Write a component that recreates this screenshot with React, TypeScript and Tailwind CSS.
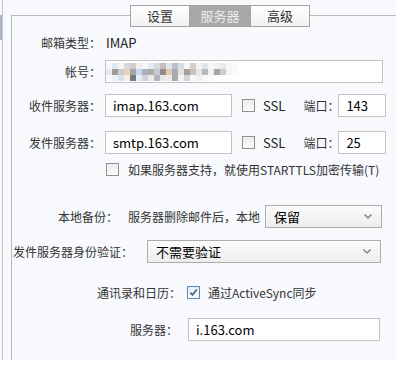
import React from "react";

const font = "font-['Microsoft_YaHei','Noto_Sans_CJK_SC',sans-serif]";

const mosaic = [
  ["#f6f7fa", "#e2e7ee", "#f4f5f7", "#d9d9dd", "#cfcbcb", "#eeeeef", "#f7f7f7", "#e6e9ef", "#d5d7dd", "#c4bfbf", "#e1e5eb", "#bcc0c7", "#d9dde5", "#f5f5f6", "#d2cdcc", "#f3f3f3", "#e3e5ea", "#f6f6f6", "#f2f2f3", "#eaeaea", "#f8f8f8", "#fbfbfb"],
  ["#e7ebf1", "#a39a94", "#c9ccd0", "#e9d3b8", "#9fa6aa", "#c6d9ec", "#aab2bd", "#b3aba6", "#c2cad9", "#938a83", "#dfcab1", "#a6aebd", "#e9e1d9", "#a39e9e", "#cac2be", "#ece5de", "#b9b9bd", "#f1f1f2", "#a8a2a2", "#d3c9c4", "#f4f4f4", "#fbfbfb"],
  ["#f8f9fb", "#eef0f3", "#dde2e8", "#f4efe9", "#7c7a78", "#e4ecf4", "#d0d4da", "#ecebea", "#b5b3b3", "#e6e6e8", "#f2ebe3", "#a9aab0", "#f1f2f4", "#d7d7d9", "#f7f7f7", "#efefef", "#f9f9f9", "#fbfbfb", "#fcfcfc", "#fdfdfd", "#fefefe", "#ffffff"],
];

function Input({ value, w, children }: { value?: string; w: string; children?: React.ReactNode }) {
  return (
    <div className={`${w} h-[23px] shrink-0 border border-[#c3c3c3] bg-white flex items-center px-[7px] text-[13px] text-black`}>
      {children ?? value}
    </div>
  );
}

function Check({ checked }: { checked?: boolean }) {
  return (
    <div
      className={`w-[13px] h-[13px] shrink-0 border ${checked ? "border-[#5b89b8]" : "border-[#8e8f8f]"} bg-gradient-to-b from-[#ededed] to-[#fbfbfb] flex items-center justify-center`}
    >
      {checked && (
        <svg width="9" height="9" viewBox="0 0 9 9">
          <path d="M1.2 4.6 L3.5 6.8 L7.8 1.6" fill="none" stroke="#2e5f96" strokeWidth="1.5" />
        </svg>
      )}
    </div>
  );
}

function Select({ value, w }: { value: string; w: string }) {
  return (
    <div className={`${w} h-[23px] shrink-0 border border-[#adadad] bg-gradient-to-b from-[#fbfbfb] to-[#ededed] flex items-center justify-between pl-[8px] pr-[9px] text-[13px] text-black`}>
      <span>{value}</span>
      <svg width="8" height="5" viewBox="0 0 8 5">
        <path d="M0.5 0.5 L4 4 L7.5 0.5" fill="none" stroke="#6e6e6e" strokeWidth="1.1" />
      </svg>
    </div>
  );
}

const label = "text-[12px] text-[#333] whitespace-nowrap";

export default function App() {
  return (
    <div className={`w-[396px] h-[370px] bg-white flex flex-col overflow-hidden ${font}`}>
      <div className="h-[360px] flex bg-[#f7f9fd]">
        {/* left scroll strip */}
        <div className="w-[3px] border-r border-[#c6c6c6] pt-[15px]">
          <div className="h-[25px] bg-[#a9b6c8]" />
        </div>
        <div className="w-[8px]" />
        <div className="flex-1 flex flex-col">
          <div className="h-[15px]" />
          <div className="flex-1 border-l border-t border-[#b9b9b9] flex flex-col">
            {/* tabs */}
            <div className="-mt-[11px] ml-[118px] flex h-[22px] text-[13px]">
              <div className="w-[60px] border border-[#a3a3a3] bg-gradient-to-b from-[#ffffff] to-[#f1f1f1] flex items-center justify-center text-[#333]">设置</div>
              <div className="w-[60px] border-y border-[#a3a3a3] bg-[#a8a8a8] flex items-center justify-center text-[#ececec]">服务器</div>
              <div className="w-[60px] border border-[#a3a3a3] bg-gradient-to-b from-[#ffffff] to-[#f1f1f1] flex items-center justify-center text-[#333]">高级</div>
            </div>

            <div className="mt-[4px] h-[23px] flex items-center">
              <div className={`w-[89px] text-right ${label}`}>邮箱类型：</div>
              <div className="ml-[5px] text-[13px] text-[#222]">IMAP</div>
            </div>

            <div className="mt-[6px] h-[23px] flex items-center">
              <div className={`w-[89px] text-right ${label}`}>帐号：</div>
              <div className="ml-[4px]">
                <Input w="w-[278px]">
                  <div className="flex flex-col -ml-[7px]">
                    {mosaic.map((row, i) => (
                      <div key={i} className="flex">
                        {row.map((c, j) => (
                          <div key={j} className="w-[6px] h-[6px]" style={{ background: c }} />
                        ))}
                      </div>
                    ))}
                  </div>
                </Input>
              </div>
            </div>

            <div className="mt-[11px] h-[23px] flex items-center">
              <div className={`w-[89px] text-right ${label}`}>收件服务器：</div>
              <div className="ml-[4px]"><Input w="w-[127px]" value="imap.163.com" /></div>
              <div className="ml-[10px]"><Check /></div>
              <div className="ml-[8px] text-[13px] text-[#222]">SSL</div>
              <div className={`ml-[18px] ${label}`}>端口：</div>
              <div className="ml-[-1px]"><Input w="w-[48px]" value="143" /></div>
            </div>

            <div className="mt-[14px] h-[23px] flex items-center">
              <div className={`w-[89px] text-right ${label}`}>发件服务器：</div>
              <div className="ml-[4px]"><Input w="w-[127px]" value="smtp.163.com" /></div>
              <div className="ml-[10px]"><Check /></div>
              <div className="ml-[8px] text-[13px] text-[#222]">SSL</div>
              <div className={`ml-[18px] ${label}`}>端口：</div>
              <div className="ml-[-1px]"><Input w="w-[48px]" value="25" /></div>
            </div>

            <div className="mt-[4px] h-[23px] flex items-center pl-[94px]">
              <Check />
              <div className={`ml-[9px] ${label}`}>如果服务器支持，就使用STARTTLS加密传输(T)</div>
            </div>

            <div className="mt-[24px] h-[23px] flex items-center pl-[46px]">
              <div className={label}>本地备份：</div>
              <div className={`ml-[10px] ${label}`}>服务器删除邮件后，本地</div>
              <div className="ml-[5px]"><Select w="w-[117px]" value="保留" /></div>
            </div>

            <div className="mt-[12px] h-[23px] flex items-center pl-[1px]">
              <div className={label}>发件服务器身份验证：</div>
              <div className="ml-[14px]"><Select w="w-[234px]" value="不需要验证" /></div>
            </div>

            <div className="mt-[18px] h-[23px] flex items-center pl-[85px]">
              <div className={label}>通讯录和日历：</div>
              <div className="ml-[6px]"><Check checked /></div>
              <div className={`ml-[8px] ${label}`}>通过ActiveSync同步</div>
            </div>

            <div className="mt-[14px] h-[23px] flex items-center pl-[118px]">
              <div className={label}>服务器：</div>
              <div className="ml-[10px]"><Input w="w-[192px]" value="i.163.com" /></div>
            </div>
          </div>
        </div>
      </div>
    </div>
  );
}
